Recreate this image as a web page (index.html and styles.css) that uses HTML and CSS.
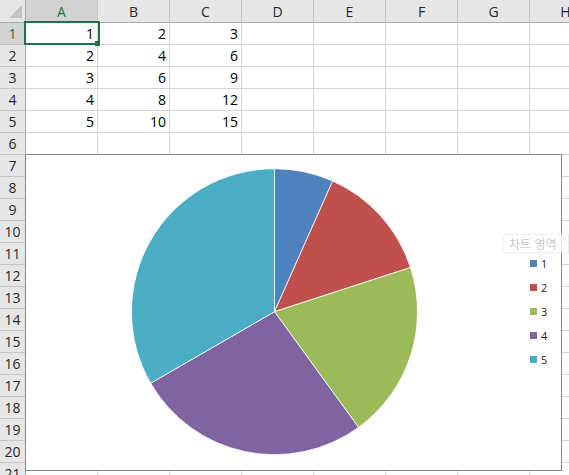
FILE: index.html
```html
<!DOCTYPE html>
<html lang="ko">
<head>
<meta charset="utf-8">
<title>Sheet</title>
<link rel="stylesheet" href="styles.css">
</head>
<body>
<div class="sheet">
  <div class="row head">
    <div class="corner"><span class="tri"></span></div>
    <div class="ch sel">A</div><div class="ch">B</div><div class="ch">C</div><div class="ch">D</div><div class="ch">E</div><div class="ch">F</div><div class="ch">G</div><div class="ch">H</div>
  </div>
  <div class="row"><div class="rh sel">1</div><div class="c">1</div><div class="c">2</div><div class="c">3</div><div class="c"></div><div class="c"></div><div class="c"></div><div class="c"></div><div class="c"></div></div>
  <div class="row"><div class="rh">2</div><div class="c">2</div><div class="c">4</div><div class="c">6</div><div class="c"></div><div class="c"></div><div class="c"></div><div class="c"></div><div class="c"></div></div>
  <div class="row"><div class="rh">3</div><div class="c">3</div><div class="c">6</div><div class="c">9</div><div class="c"></div><div class="c"></div><div class="c"></div><div class="c"></div><div class="c"></div></div>
  <div class="row"><div class="rh">4</div><div class="c">4</div><div class="c">8</div><div class="c">12</div><div class="c"></div><div class="c"></div><div class="c"></div><div class="c"></div><div class="c"></div></div>
  <div class="row"><div class="rh">5</div><div class="c">5</div><div class="c">10</div><div class="c">15</div><div class="c"></div><div class="c"></div><div class="c"></div><div class="c"></div><div class="c"></div></div>
  <div class="row"><div class="rh">6</div><div class="c"></div><div class="c"></div><div class="c"></div><div class="c"></div><div class="c"></div><div class="c"></div><div class="c"></div><div class="c"></div></div>
  <div class="row"><div class="rh">7</div><div class="c"></div><div class="c"></div><div class="c"></div><div class="c"></div><div class="c"></div><div class="c"></div><div class="c"></div><div class="c"></div></div>
  <div class="row"><div class="rh">8</div><div class="c"></div><div class="c"></div><div class="c"></div><div class="c"></div><div class="c"></div><div class="c"></div><div class="c"></div><div class="c"></div></div>
  <div class="row"><div class="rh">9</div><div class="c"></div><div class="c"></div><div class="c"></div><div class="c"></div><div class="c"></div><div class="c"></div><div class="c"></div><div class="c"></div></div>
  <div class="row"><div class="rh">10</div><div class="c"></div><div class="c"></div><div class="c"></div><div class="c"></div><div class="c"></div><div class="c"></div><div class="c"></div><div class="c"></div></div>
  <div class="row"><div class="rh">11</div><div class="c"></div><div class="c"></div><div class="c"></div><div class="c"></div><div class="c"></div><div class="c"></div><div class="c"></div><div class="c"></div></div>
  <div class="row"><div class="rh">12</div><div class="c"></div><div class="c"></div><div class="c"></div><div class="c"></div><div class="c"></div><div class="c"></div><div class="c"></div><div class="c"></div></div>
  <div class="row"><div class="rh">13</div><div class="c"></div><div class="c"></div><div class="c"></div><div class="c"></div><div class="c"></div><div class="c"></div><div class="c"></div><div class="c"></div></div>
  <div class="row"><div class="rh">14</div><div class="c"></div><div class="c"></div><div class="c"></div><div class="c"></div><div class="c"></div><div class="c"></div><div class="c"></div><div class="c"></div></div>
  <div class="row"><div class="rh">15</div><div class="c"></div><div class="c"></div><div class="c"></div><div class="c"></div><div class="c"></div><div class="c"></div><div class="c"></div><div class="c"></div></div>
  <div class="row"><div class="rh">16</div><div class="c"></div><div class="c"></div><div class="c"></div><div class="c"></div><div class="c"></div><div class="c"></div><div class="c"></div><div class="c"></div></div>
  <div class="row"><div class="rh">17</div><div class="c"></div><div class="c"></div><div class="c"></div><div class="c"></div><div class="c"></div><div class="c"></div><div class="c"></div><div class="c"></div></div>
  <div class="row"><div class="rh">18</div><div class="c"></div><div class="c"></div><div class="c"></div><div class="c"></div><div class="c"></div><div class="c"></div><div class="c"></div><div class="c"></div></div>
  <div class="row"><div class="rh">19</div><div class="c"></div><div class="c"></div><div class="c"></div><div class="c"></div><div class="c"></div><div class="c"></div><div class="c"></div><div class="c"></div></div>
  <div class="row"><div class="rh">20</div><div class="c"></div><div class="c"></div><div class="c"></div><div class="c"></div><div class="c"></div><div class="c"></div><div class="c"></div><div class="c"></div></div>
  <div class="row"><div class="rh">21</div><div class="c"></div><div class="c"></div><div class="c"></div><div class="c"></div><div class="c"></div><div class="c"></div><div class="c"></div><div class="c"></div></div>

  <div class="selection"><span class="handle"></span></div>

  <div class="chart">
    <svg class="pie" width="535" height="315" viewBox="0 0 535 315" xmlns="http://www.w3.org/2000/svg">
      <g transform="translate(248.5 156.7)" stroke="#ffffff" stroke-width="0.8" stroke-linejoin="round">
        <path d="M0 0 L0 -143 A143 143 0 0 1 58.16 -130.64 Z" fill="#4f81bd"/>
        <path d="M0 0 L58.16 -130.64 A143 143 0 0 1 136.0 -44.19 Z" fill="#c0504d"/>
        <path d="M0 0 L136.0 -44.19 A143 143 0 0 1 84.05 115.69 Z" fill="#9bbb59"/>
        <path d="M0 0 L84.05 115.69 A143 143 0 0 1 -123.84 71.5 Z" fill="#8064a2"/>
        <path d="M0 0 L-123.84 71.5 A143 143 0 0 1 0 -143 Z" fill="#4bacc6"/>
      </g>
    </svg>
    <ul class="legend">
      <li><span class="key k1"></span>1</li>
      <li><span class="key k2"></span>2</li>
      <li><span class="key k3"></span>3</li>
      <li><span class="key k4"></span>4</li>
      <li><span class="key k5"></span>5</li>
    </ul>
  </div>

  <div class="tip">차트 영역</div>
</div>
</body>
</html>
```
FILE: styles.css
```css
html, body {
  margin: 0;
  padding: 0;
  background: #ffffff;
}

.sheet {
  position: relative;
  width: 569px;
  height: 475px;
  overflow: hidden;
  font-family: "Open Sans", "Noto Sans CJK KR", sans-serif;
  font-size: 14px;
  color: #000000;
}

.row {
  display: grid;
  grid-template-columns: 26px repeat(8, 72px);
  height: 22px;
}

.row.head {
  height: 23px;
}

.row > div {
  box-sizing: border-box;
  display: flex;
  align-items: center;
  overflow: hidden;
  white-space: nowrap;
}

.c {
  border-right: 1px solid #d4d4d4;
  border-bottom: 1px solid #d4d4d4;
  justify-content: flex-end;
  padding-right: 3px;
}

.corner {
  background: #e6e6e6;
  border-right: 1px solid #ababab;
  border-bottom: 1px solid #ababab;
  justify-content: flex-end;
  align-items: flex-end !important;
  padding: 0 3px 4px 0;
}

.tri {
  width: 0;
  height: 0;
  border-left: 13px solid transparent;
  border-bottom: 13px solid #c3c3c3;
}

.ch {
  background: #e6e6e6;
  border-right: 1px solid #c4c4c4;
  border-bottom: 1px solid #ababab;
  justify-content: center;
  color: #262626;
}

.rh {
  background: #e6e6e6;
  border-right: 1px solid #ababab;
  border-bottom: 1px solid #c4c4c4;
  justify-content: center;
  color: #262626;
  padding-left: 0;
}

.ch.sel,
.rh.sel {
  background: #d2d2d2;
  color: #217346;
}

.selection {
  position: absolute;
  left: 24px;
  top: 21px;
  width: 76px;
  height: 24px;
  box-sizing: border-box;
  border: 2px solid #217346;
}

.handle {
  position: absolute;
  right: -2px;
  bottom: -3px;
  width: 5px;
  height: 5px;
  background: #217346;
}

.chart {
  position: absolute;
  left: 25px;
  top: 154px;
  width: 537px;
  height: 317px;
  box-sizing: border-box;
  border: 1px solid #878787;
  background: #ffffff;
}

.pie {
  display: block;
}

.legend {
  position: absolute;
  left: 504px;
  top: 96px;
  margin: 0;
  padding: 0;
  list-style: none;
  font-size: 11px;
  color: #262626;
}

.legend li {
  display: flex;
  align-items: center;
  gap: 4px;
  height: 24px;
}

.key {
  width: 7px;
  height: 7px;
}

.k1 { background: #4f81bd; }
.k2 { background: #c0504d; }
.k3 { background: #9bbb59; }
.k4 { background: #8064a2; }
.k5 { background: #4bacc6; }

.tip {
  position: absolute;
  left: 503px;
  top: 234px;
  width: 66px;
  height: 19px;
  box-sizing: border-box;
  padding-left: 5px;
  display: flex;
  align-items: center;
  font-family: "Noto Sans CJK KR", sans-serif;
  font-size: 12px;
  color: #c8c8c8;
  background: rgba(255, 255, 255, 0.78);
  border: 1px solid rgba(210, 210, 210, 0.35);
  box-shadow: 1px 1px 2px rgba(0, 0, 0, 0.04);
}
```
